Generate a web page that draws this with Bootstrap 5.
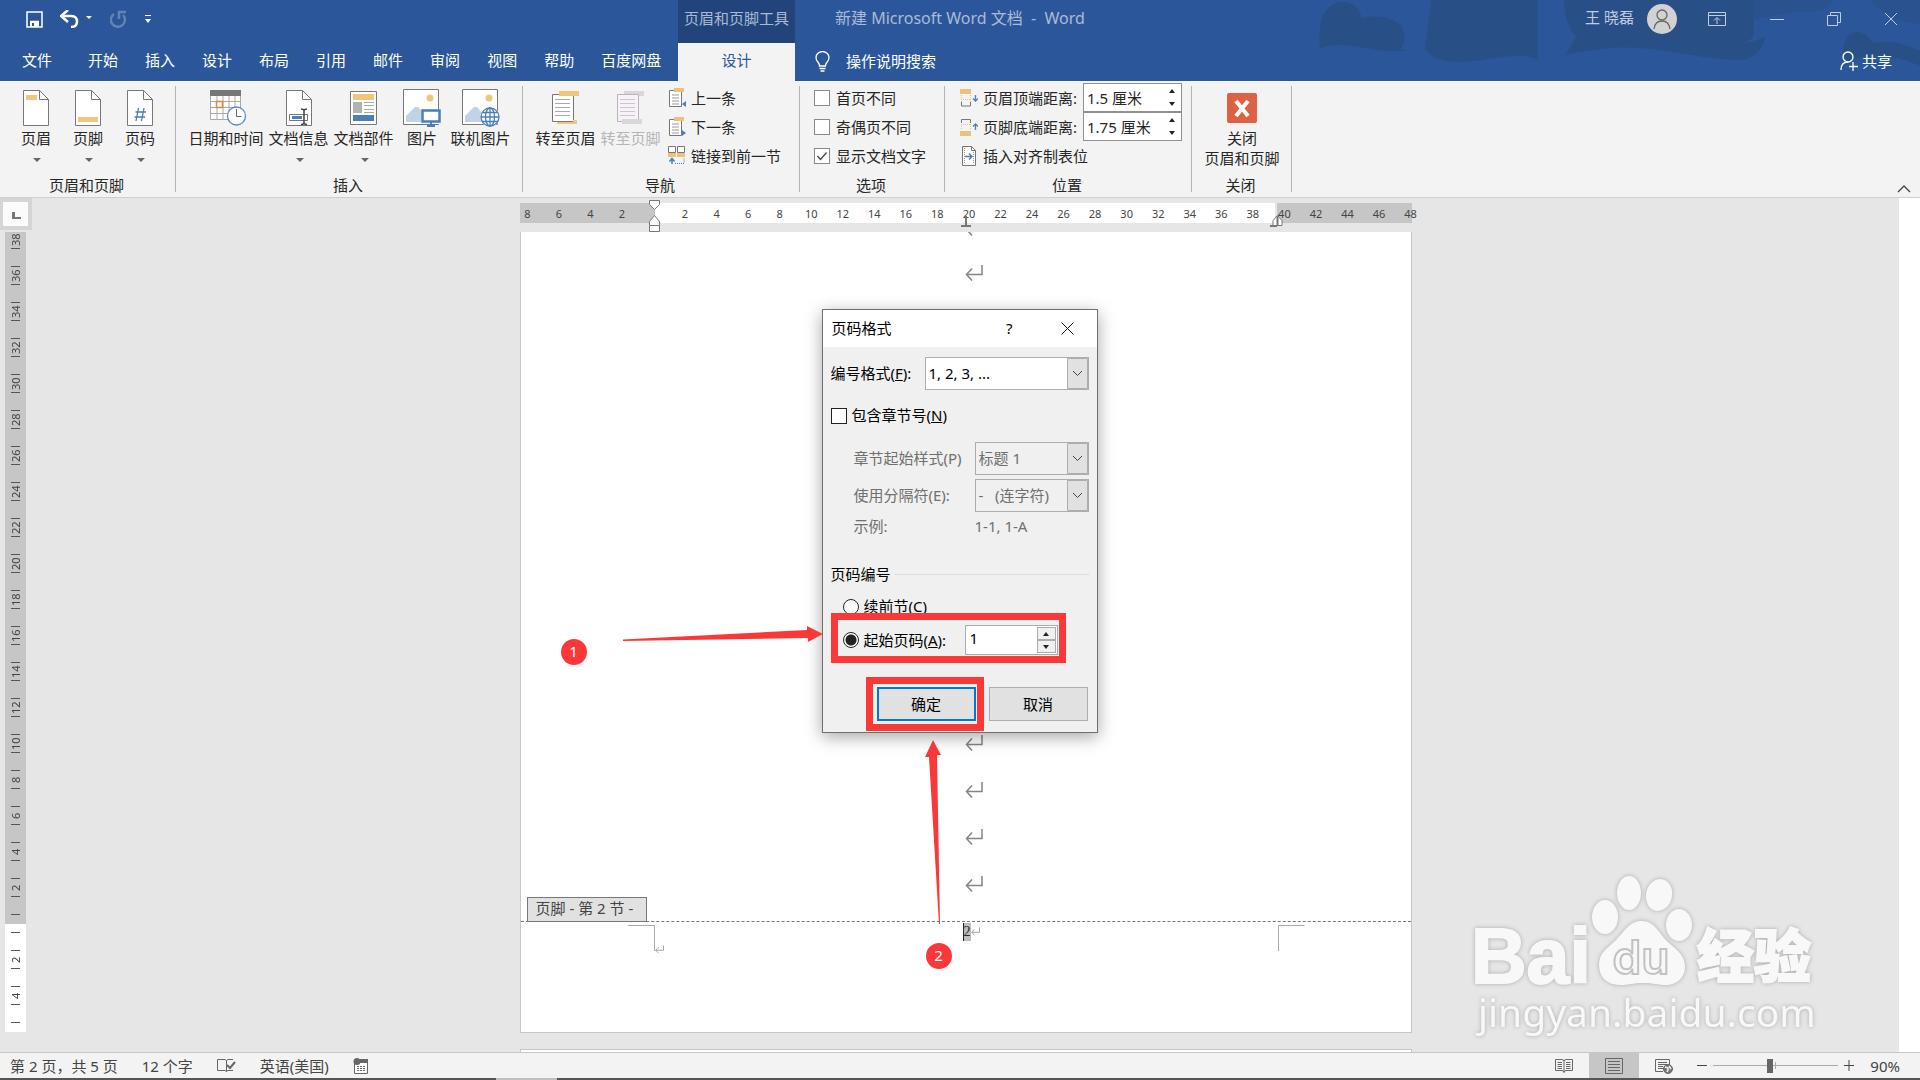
<!DOCTYPE html>
<html lang="zh-CN">
<head>
<meta charset="utf-8">
<meta name="viewport" content="width=device-width, initial-scale=1">
<title>新建 Microsoft Word 文档 - Word</title>
<link href="https://cdn.jsdelivr.net/npm/bootstrap@5.3.0/dist/css/bootstrap.min.css" rel="stylesheet">
<style>
  body { font-family: "Noto Sans", "Noto Sans CJK SC", sans-serif; font-size: 15px; line-height: 20px; color: #262626; background: #e6e6e6; }
  button, input, select { font: inherit; color: inherit; }
  button { border: 0; background: none; padding: 0; }
  svg { display: block; flex: none; }

  /* title bar and tabs */
  .app-head { display: grid; grid-template: 43px 38px / 678px 117px 1fr; background: #2b579a; color: #fff; }
  .head-art { position: absolute; right: 0; top: 0; }
  .ctx-title { background: #23447b; color: #aabbd7; padding-bottom: 7px; }
  .doc-title { color: #aabbd7; padding: 0 0 7px 40px; font-size: 16px; white-space: pre; }
  .qat { padding: 0 0 5px 26px; gap: 17px; }
  .win-tools { color: #c0cde1; padding: 0 22px 5px 0; }
  .win-gap { margin-left: 36px; }
  .tab-row { padding: 0 0 4px 22px; }
  .tab-link { color: #fff; text-decoration: none; margin-right: 27px; }
  .tab-link:first-child { margin-right: 36px; }
  .tab-current { background: #f3f3f3; color: #2b579a; text-decoration: none; }
  .tell-me { padding: 0 28px 2px 20px; }

  /* ribbon */
  .ribbon { background: #f3f3f3; border-bottom: 1px solid #cfcfcf; height: 117px; }
  .rb-group { position: relative; display: flex; flex-direction: column; padding-top: 2px; flex: none; }
  .rb-group::after { content: ""; position: absolute; right: 0; top: 5px; bottom: 5px; width: 1px; background: #b4b4b4; }
  .rb-body { display: flex; height: 92px; padding-left: 10px; }
  .rb-name { text-align: center; padding-right: 3px; }
  .g-hf { width: 176px; } .g-ins { width: 347px; } .g-nav { width: 277px; }
  .g-opt { width: 145px; } .g-pos { width: 247px; } .g-close { width: 100px; }
  .g-opt .rb-body { padding-left: 14px; } .g-pos .rb-body { padding-left: 15px; }
  .nav-list { padding-left: 5px; }
  .big-btn { display: flex; flex-direction: column; align-items: center; padding-top: 5px; width: 65px; white-space: nowrap; }
  .big-btn .ico { height: 40px; display: flex; align-items: center; justify-content: center; }
  .w-s { width: 52px; } .w-l { width: 80px; }
  .big-btn:disabled { color: #b5b5b5; }
  .caret-dn { width: 0; height: 0; border: 4px solid transparent; border-top-color: #666; border-bottom: 0; margin: 10px 0 0 2px; }
  .sm-row { display: flex; align-items: center; height: 29px; gap: 5px; white-space: nowrap; }
  .rb-check { appearance: none; width: 16px; height: 16px; border: 1px solid #8a8a8a; background: #fff; margin: 0 1px 0 0; }
  .rb-check:checked { background: #fff url("data:image/svg+xml,%3Csvg xmlns='http://www.w3.org/2000/svg' viewBox='0 0 14 14'%3E%3Cpath d='M2.500 7l3 3.500 6-7' fill='none' stroke='%23444' stroke-width='1.300'/%3E%3C/svg%3E"); }
  .rb-spin { display: flex; width: 99px; height: 29px; border: 1px solid #919191; background: #fff; margin: 0 10px 0 auto; }
  .rb-spin input { border: 0; width: 78px; padding: 0 3px; background: none; }
  .rb-spin span { display: flex; flex-direction: column; justify-content: space-around; flex: 1; align-items: center; }
  .tri-up, .tri-dn { width: 0; height: 0; border: 3px solid transparent; display: block; }
  .tri-up { border-bottom: 4px solid #222; border-top: 0; }
  .tri-dn { border-top: 4px solid #222; border-bottom: 0; }

  /* work area */
  .work { flex: 1; min-height: 0; overflow: hidden; }
  .left-col { width: 32px; }
  .tab-pick { width: 32px; height: 32px; background: #fbfbfb; border: 4px solid #d5d5d5; border-left-width: 3px; padding: 10px 0 0 9px; }
  .v-ruler { width: 21px; margin: 2px 0 0 5px; font-size: 11px; line-height: 21px; color: #444; }
  .v-body { background: #c6c6c6; height: 692px; overflow: hidden; display: flex; flex-direction: column; justify-content: flex-end; }
  .v-foot { background: #fff; height: 108px; }
  .v-scale { display: flex; flex-direction: column; background: repeating-linear-gradient(transparent 0 8px, #555 8px 9px, transparent 9px 18px) top / 9px 18px repeat-y; }
  .v-scale span { height: 36px; writing-mode: vertical-rl; transform: rotate(180deg); text-align: center; }
  .v-body .v-scale { padding-bottom: 18px; }
  .v-foot .v-scale { padding-top: 18px; height: 108px; }
  .canvas-col { width: 892px; position: relative; display: flex; flex-direction: column; }
  .h-ruler { height: 20px; margin-top: 5px; position: relative; background: linear-gradient(90deg, #c6c6c6 0 135px, #fff 135px 755px, #e6e6e6 755px 757px, #c6c6c6 757px); }
  .h-scale { display: flex; margin: 0 -15px 0 -8px; padding-top: 1px; font-size: 11px; color: #444; }
  .h-scale span { flex: 1 1 0; text-align: center; }
  .h-marks { position: absolute; left: 0; top: -5px; }
  .sheet { background: #fff; border: 1px solid #c6c6c6; border-top: 0; margin-top: 9px; height: 801px; position: relative; flex: none; }
  .sheet-next { background: #fff; border: 1px solid #c6c6c6; border-bottom: 0; margin-top: 16px; height: 20px; flex: none; }
  .sheet-text { height: 690px; border-bottom: 1px dashed #777; display: flex; flex-direction: column; align-items: center; overflow: hidden; padding-left: 16px; }
  .para { height: 47px; flex: none; display: flex; align-items: center; }
  .para-cut { height: 17px; align-items: flex-start; }
  .para-cut svg { margin-top: -12px; }
  .foot-tag { position: absolute; left: 6px; top: 665px; width: 120px; height: 25px; border: 1px solid #777; background: #e1e1e1; color: #444; padding-left: 8px; line-height: 20px; white-space: nowrap; }
  .foot-line { display: flex; justify-content: center; padding: 1px 0 0 11px; font: 14px/18px "Liberation Serif", serif; }
  .foot-num { background: #bdbdbd; border-left: 1px solid #222; }
  .overlay-art { position: absolute; left: 0; top: 0; pointer-events: none; }
  .scroll-strip { width: 21px; background: #fff; }

  /* dialog */
  .dlg { position: absolute; left: 301px; top: 77px; width: 276px; height: 424px; border: 1px solid #6e6e6e; background: #f0f0f0; color: #000; box-shadow: 0 4px 16px rgba(0,0,0,.35); white-space: nowrap; }
  .dlg-head { height: 37px; background: #fff; padding: 0 23px 1px 9px; }
  .dlg-body { padding: 10px 8px 0; }
  .dlg-sel { appearance: none; border: 1px solid #adadad; border-radius: 0; height: 33px; width: 114px; padding: 0 24px 1px 3px; color: inherit; opacity: 1;
    background: url("data:image/svg+xml,%3Csvg xmlns='http://www.w3.org/2000/svg' width='21' height='31'%3E%3Cpath d='M.5.5h20v30H.5z' fill='%23e1e1e1' stroke='%23adadad'/%3E%3Cpath d='M6 13l4.500 4.500L15 13' fill='none' stroke='%23444'/%3E%3C/svg%3E") right center no-repeat; }
  .dlg-sel.wide-sel { width: 164px; background-color: #fff; }
  .dlg-body label { padding-bottom: 1px; }
  .dim { color: #6f6f6f; padding-left: 23px; }
  .pick-row { margin-top: 15px; gap: 5px; }
  .sample { width: 114px; }
  .dlg-check { appearance: none; width: 16px; height: 16px; border: 1px solid #222; background: #fff; margin: 0; }
  .dlg-radio { appearance: none; width: 16px; height: 16px; border: 1px solid #222; border-radius: 50%; background: #fff; margin: 0; }
  .dlg-radio:checked { background: radial-gradient(circle, #222 0 5px, #fff 6px); }
  .radio-row { display: flex; align-items: center; gap: 5px; padding-left: 12px; }
  .dlg-rule { flex: 1; height: 1px; background: #dcdcdc; }
  .dlg-spin { display: flex; width: 93px; height: 30px; border: 1px solid #adadad; background: #fff; padding: 1px; margin: 0 31px 0 auto; }
  .dlg-spin input { border: 0; width: 70px; padding: 0 3px 4px; background: none; }
  .dlg-spin span { flex: 1; display: flex; flex-direction: column; }
  .dlg-spin button { flex: 1; border: 1px solid #adadad; background: #f0f0f0; display: flex; align-items: center; justify-content: center; }
  .dlg-foot { gap: 13px; padding: 32px 1px 0 0; }
  .dlg-btn { width: 99px; height: 34px; background: #e1e1e1; border: 1px solid #adadad; }
  .dlg-ok { border: 2px solid #0078d7; }
  .call-box { position: absolute; border: 7px solid #fb3838; pointer-events: none; }
  .box-num { left: 8px; top: 303px; width: 235px; height: 50px; }
  .box-ok { left: 43px; top: 367px; width: 118px; height: 54px; }
  .call-dot { position: absolute; width: 26px; height: 26px; border-radius: 50%; background: #fb3838; color: #fff; text-align: center; line-height: 24px; }
  .dot-one { left: 40px; top: 407px; } .dot-two { left: 405px; top: 711px; }

  .brand-mark { position: absolute; right: 94px; bottom: 12px; filter: drop-shadow(0 0 2px #aaa); }

  /* status bar */
  .status { height: 28px; background: #f3f3f3; border-top: 1px solid #c6c6c6; border-bottom: 2px solid #555; color: #444; position: relative; padding-left: 10px; }
  .status::after { content: ""; position: absolute; left: 496px; bottom: -2px; width: 61px; height: 2px; background: #c0c0c0; }
  .view-btn { width: 50px; height: 25px; display: flex; align-items: center; justify-content: center; }
  .view-on { background: #c6c6c6; }
  .zoom-range { appearance: none; width: 125px; height: 16px; margin: 0 6px 0 2px; background: linear-gradient(#aaa, #aaa) center / 100% 1px no-repeat, linear-gradient(#aaa, #aaa) center / 1px 7px no-repeat; }
  .zoom-range::-webkit-slider-thumb { appearance: none; width: 6px; height: 14px; background: #666; }
  .zoom-link { color: #444; text-decoration: none; margin: 0 20px 0 16px; }
</style>
</head>
<body class="vh-100 overflow-hidden d-flex flex-column m-0">

<svg width="0" height="0" class="position-absolute">
  <defs>
    <symbol id="pg" viewBox="0 0 26 36"><path d="M.5.5h16l9 9v26H.5z" fill="#fff" stroke="#777"/><path d="M16.500.5v9h9" fill="none" stroke="#777"/></symbol>
    <symbol id="ret" viewBox="0 0 18 16"><path d="M17 0v9.500H1.500M7 3.500L1.500 9.500 7 15.500" fill="none" stroke="#858585" stroke-width="1.500"/></symbol>
    <symbol id="pic" viewBox="0 0 38 38"><path d="M.5.5h35v35H.5z" fill="#fff" stroke="#777"/><circle cx="27" cy="9" r="3.500" fill="#eec77c"/><path d="M3 33V27l9-9h3l7 8v7z" fill="#c0d3e8"/></symbol>
    <symbol id="doc" viewBox="0 0 18 20"><path d="M1.500 2.500h12v16h-12z" fill="#fff" stroke="#777"/><path d="M4 7h7M4 10h7M4 13h7M4 16h7" stroke="#999"/><path d="M6 0h10v4H6z" fill="#ecc27a"/></symbol>
  </defs>
</svg>

<header class="app-head position-relative">
  <svg class="head-art" width="640" height="81" fill="#294f87">
    <path d="M40 49C37 22 44 3 62 2c14 0 18 9 20 16 12-3 30-2 39 8 7 12 2 18 0 23 10 1 5 2-18 2-28-4-45-10-63-2zM151 0h107v60c-24-12-55 6-93 1q-14-3-20-12zM284 0h190v34q-2 8-14 9 17-1 25-7c0 10-9 25-30 24-45-2-80-15-123-12q-26 2-47 7l11-18q-12-14-12-37zM568 62c-10-15-2-29 9-30 9 0 12 6 16 11 16-2 26-2 47 8v15q-22-11-45-10-15 0-27 6z"/>
    <path d="M474 0h80q-10 14-34 12-26 2-46 8zM590 0h50v24q-30-2-50-24z" opacity=".6"/>
  </svg>
  <div class="qat d-flex align-items-center position-relative">
    <button aria-label="保存"><svg width="17" height="17"><path d="M1 1h15v15H1z M4 10.500h9" fill="none" stroke="#fff" stroke-width="1.500"/><path d="M4 11h9v5H4z" fill="#fff"/><path d="M6 12h2v3H6z" fill="#2b579a"/></svg></button>
    <button aria-label="撤消"><svg width="33" height="18"><path d="M2 6h9q6 0 6 5.500T11 17" fill="none" stroke="#fff" stroke-width="2.500"/><path d="M8 0L1 6l7 6" fill="none" stroke="#fff" stroke-width="2.500"/><path d="M26 6h6l-3 3z" fill="#fff"/></svg></button>
    <button aria-label="重复"><svg width="18" height="18" viewBox="7 0 18 18" fill="none" stroke="#6482b3" stroke-width="2.500"><path d="M11 4a7 7 0 1 0 9 1M16 9V2h7"/></svg></button>
    <button aria-label="自定义快速访问工具栏"><svg width="6" height="8"><path d="M0 0h6v1H0zM0 4h6L3 8z" fill="#fff"/></svg></button>
  </div>
  <div class="ctx-title d-flex align-items-center justify-content-center text-nowrap">页眉和页脚工具</div>
  <div class="d-flex justify-content-between position-relative">
    <div class="doc-title d-flex align-items-center">新建 Microsoft Word 文档  -  Word</div>
    <div class="win-tools d-flex align-items-center">
      <span class="pb-1">王 晓磊</span>
      <svg class="ms-2 me-1" width="38" height="30" viewBox="-5 0 38 30"><circle cx="15" cy="15" r="15" fill="#d2d2d2"/><g fill="none" stroke="#666" stroke-width="1.300"><circle cx="15" cy="11" r="5"/><path d="M7 25q1-8 8-8t8 8"/></g></svg>
      <button aria-label="功能区显示选项" class="ms-4"><svg width="18" height="14" fill="none" stroke="#c0cde1"><path d="M.5.5h17v13H.5zM.5 3.500h17M9 12V6M6 8.500l3-3 3 3"/></svg></button>
      <button aria-label="最小化" class="win-gap ps-2"><svg width="14" height="14"><path d="M0 7.500h14" stroke="#c0cde1"/></svg></button>
      <button aria-label="还原" class="win-gap ps-1"><svg width="44" height="14" viewBox="6 0 44 14" fill="none" stroke="#c0cde1"><path d="M9.500 3.500h10v10h-10zM12.500 3V.5h10v10H20"/></svg></button>
      <button aria-label="关闭" class="ms-3"><svg width="14" height="14"><path d="M1 1l12 12M13 1L1 13" stroke="#c0cde1"/></svg></button>
    </div>
  </div>
  <nav class="tab-row d-flex align-items-center text-nowrap position-relative">
    <a class="tab-link" href="#">文件</a><a class="tab-link" href="#">开始</a><a class="tab-link" href="#">插入</a><a class="tab-link" href="#">设计</a><a class="tab-link" href="#">布局</a><a class="tab-link" href="#">引用</a><a class="tab-link" href="#">邮件</a><a class="tab-link" href="#">审阅</a><a class="tab-link" href="#">视图</a><a class="tab-link" href="#">帮助</a><a class="tab-link" href="#">百度网盘</a>
  </nav>
  <a class="tab-current d-flex align-items-center justify-content-center pb-1" href="#">设计</a>
  <div class="tell-me d-flex align-items-center position-relative">
    <svg width="15" height="21" fill="none" stroke="#fff" stroke-width="1.300"><path d="M4.500 15c0-4-3.500-4-3.500-8.500a6.500 6 0 0 1 13 0C14 11 10.500 11 10.500 15zM4.500 17.500h6M5.500 20h4"/></svg>
    <a class="text-white text-decoration-none ms-3" href="#">操作说明搜索</a>
    <button class="d-flex align-items-center ms-auto gap-1"><svg width="18" height="20" fill="none" stroke="#fff" stroke-width="1.300"><circle cx="8" cy="6" r="5"/><path d="M1 19q0-8 7-8M13 11v9M9 15.500h9"/></svg>共享</button>
  </div>
</header>

<section class="ribbon d-flex position-relative">
  <div class="rb-group g-hf"><div class="rb-body">
    <button class="big-btn w-s"><span class="ico"><svg width="26" height="36"><use href="#pg"/><path d="M3 5h11v5H3z" fill="#eec77c"/></svg></span>页眉<i class="caret-dn"></i></button>
    <button class="big-btn w-s"><span class="ico"><svg width="26" height="36"><use href="#pg"/><path d="M3 27h20v5H3z" fill="#eec77c"/></svg></span>页脚<i class="caret-dn"></i></button>
    <button class="big-btn w-s"><span class="ico"><svg width="26" height="36"><use href="#pg"/><path d="M11.500 18L9 31M17 18l-2.500 13M8.500 22H19M7.500 27H18" fill="none" stroke="#4a7fb8" stroke-width="1.300"/></svg></span>页码<i class="caret-dn"></i></button>
  </div><div class="rb-name">页眉和页脚</div></div>

  <div class="rb-group g-ins"><div class="rb-body">
    <button class="big-btn w-l"><span class="ico"><svg width="32" height="36" overflow="visible"><path d="M.5.500h30v29H.5z" fill="#fff" stroke="#aaa"/><path d="M7 5v24M13 5v24M19 5v24M25 5v24M1 11.500h30M1 17.500h30M1 23.500h30" stroke="#aaa"/><path d="M0 0h31v6H0z" fill="#777"/><path d="M6.500 11.500h6v6h-6z" fill="#fff" stroke="#e08544" stroke-width="1.500"/><circle cx="26.500" cy="26" r="9" fill="#fff" stroke="#5b8cc0" stroke-width="1.300"/><path d="M26.500 19v7.500h5" fill="none" stroke="#666"/></svg></span>日期和时间</button>
    <button class="big-btn"><span class="ico"><svg width="26" height="36"><use href="#pg"/><path d="M3.500 24.500h18v6h-18z" fill="#fff" stroke="#777"/><path d="M6 26h10v3H6z" fill="#4a7fb8"/><path d="M15 19q3 0 3 2 0-2 3-2M18 20v14M15 34.500q3 0 3-2 0 2 3 2" fill="none" stroke="#444" stroke-width="1.500"/></svg></span>文档信息<i class="caret-dn"></i></button>
    <button class="big-btn"><span class="ico"><svg width="27" height="34"><path d="M.5.5h26v33H.5z" fill="#fff" stroke="#777"/><path d="M3 3h21v6H3z" fill="#eec77c"/><path d="M3 11h9v11H3z" fill="#b2b2b2"/><path d="M14 11.500h10M14 14.500h10M14 18.500h10M14 21.500h10" stroke="#aaa"/><path d="M3 24h21v6H3z" fill="#4a7fb8"/></svg></span>文档部件<i class="caret-dn"></i></button>
    <button class="big-btn w-s"><span class="ico"><svg width="38" height="38"><use href="#pic" width="38" height="38"/><path d="M18.500 20.500h19v14h-19z" fill="#fff" stroke="#f3f3f3"/><path d="M19.500 21.500h17v11h-17z" fill="#fff" stroke="#4a7fb8" stroke-width="2.500"/><path d="M24 37h8M28 33v4" stroke="#4a7fb8" stroke-width="2"/></svg></span>图片</button>
    <button class="big-btn"><span class="ico"><svg width="38" height="38"><use href="#pic" width="38" height="38"/><circle cx="28" cy="28" r="10" fill="#f3f3f3"/><g fill="#fff" stroke="#4a7fb8" stroke-width="1.300"><circle cx="28" cy="28" r="9"/><ellipse cx="28" cy="28" rx="4.500" ry="9"/><path d="M19 28h18M28 19v18M20.500 23.500h15M20.500 32.500h15" fill="none"/></g></svg></span>联机图片</button>
  </div><div class="rb-name">插入</div></div>

  <div class="rb-group g-nav"><div class="rb-body">
    <button class="big-btn"><span class="ico"><svg width="28" height="34"><path d="M.5 3.500h21v27H.5z" fill="#fff" stroke="#777"/><path d="M3 8.500h15M3 12.500h15M3 16.500h15M3 20.500h15M3 24.500h15" stroke="#aaa"/><path d="M7 0h20v5H7z" fill="#eec77c"/><path d="M5 31h16v-2h4v4H5z" fill="#eec77c"/></svg></span>转至页眉</button>
    <button class="big-btn" disabled><span class="ico"><svg width="28" height="34"><path d="M.5 3.500h21v27H.5z" fill="#f7f1f8" stroke="#b5b5b5"/><path d="M3 8.500h15M3 12.500h15M3 16.500h15M3 20.500h15M3 24.500h15" stroke="#ccc5cf"/><path d="M7 0h20v5h-5V3H7zM5 28h20v5H5z" fill="#dad6dc"/></svg></span>转至页脚</button>
    <div class="nav-list">
      <button class="sm-row"><svg width="18" height="20"><use href="#doc"/><path d="M18 13v6l-4-3z" fill="#4a7fb8"/></svg>上一条</button>
      <button class="sm-row"><svg width="18" height="20"><use href="#doc"/><path d="M14 13v6l4-3z" fill="#4a7fb8"/></svg>下一条</button>
      <button class="sm-row"><svg width="18" height="19"><path d="M.5.5h7v6h-7zM9.500.5h7v6h-7z" fill="#fff" stroke="#777"/><path d="M0 7h8v4H0zM9 7h8v4H9z" fill="#ecc27a"/><path d="M4 18v-5M1.500 15.500L4 12.500l2.500 3" fill="none" stroke="#4a7fb8" stroke-width="1.500"/><path d="M7 17.500h9V12" fill="none" stroke="#4a7fb8" stroke-dasharray="1 1"/></svg>链接到前一节</button>
    </div>
  </div><div class="rb-name">导航</div></div>

  <div class="rb-group g-opt"><div class="rb-body flex-column">
    <label class="sm-row"><input class="rb-check" type="checkbox">首页不同</label>
    <label class="sm-row"><input class="rb-check" type="checkbox">奇偶页不同</label>
    <label class="sm-row"><input class="rb-check" type="checkbox" checked>显示文档文字</label>
  </div><div class="rb-name">选项</div></div>

  <div class="rb-group g-pos"><div class="rb-body flex-column">
    <div class="sm-row"><svg width="18" height="18"><path d="M1.500 13v4h9v-4" fill="none" stroke="#777"/><path d="M1 10.500h10M1.500 6v7M10.500 6v7" stroke="#ecc27a" stroke-dasharray="1 1"/><path d="M0 0h11v5H0z" fill="#ecc27a"/><path d="M15.500 6v6M13 9.500l2.500 2.500L18 9.500" fill="none" stroke="#4a7fb8" stroke-width="1.300"/></svg><label for="hd">页眉顶端距离:</label><span class="rb-spin"><input id="hd" value="1.5 厘米"><span><i class="tri-up"></i><i class="tri-dn"></i></span></span></div>
    <div class="sm-row"><svg width="18" height="18"><path d="M1.500 5V1.500h9V5" fill="none" stroke="#777"/><path d="M1 6.500h10M1.500 6v6M10.500 6v6" stroke="#ecc27a" stroke-dasharray="1 1"/><path d="M0 13h11v5H0z" fill="#ecc27a"/><path d="M15.500 12V6M13 8.500L15.500 6 18 8.500" fill="none" stroke="#4a7fb8" stroke-width="1.300"/></svg><label for="fd">页脚底端距离:</label><span class="rb-spin"><input id="fd" value="1.75 厘米"><span><i class="tri-up"></i><i class="tri-dn"></i></span></span></div>
    <button class="sm-row"><svg width="18" height="20"><path d="M2.500.5h9l4 4v15h-13z" fill="#fff" stroke="#777"/><path d="M11.500.5v4h4" fill="none" stroke="#777"/><path d="M4.500 2v16M13.500 6v12" stroke="#999" stroke-dasharray="1 1"/><path d="M5 10.500h7M9 7.500l3 3-3 3" fill="none" stroke="#4a7fb8" stroke-width="1.500"/></svg>插入对齐制表位</button>
  </div><div class="rb-name">位置</div></div>

  <div class="rb-group g-close"><div class="rb-body ps-0 justify-content-center">
    <button class="big-btn w-l"><span class="ico"><svg width="30" height="30"><rect width="30" height="30" rx="2" fill="#db6245"/><path d="M9 8l12 15M21 8L9 23" stroke="#fff" stroke-width="4"/></svg></span>关闭<br>页眉和页脚</button>
  </div><div class="rb-name">关闭</div></div>
  <button class="ms-auto mt-auto me-2 pb-1" aria-label="折叠功能区"><svg width="16" height="8"><path d="M2 7l6-6 6 6" fill="none" stroke="#444" stroke-width="1.300"/></svg></button>
</section>

<main class="work d-flex position-relative">
  <div class="left-col">
    <div class="tab-pick"><svg width="9" height="7"><path d="M0 0h3v5h6v2H0z" fill="#777"/></svg></div>
    <div class="v-ruler">
      <div class="v-body"><div class="v-scale"><span>38</span><span>36</span><span>34</span><span>32</span><span>30</span><span>28</span><span>26</span><span>24</span><span>22</span><span>20</span><span>18</span><span>16</span><span>14</span><span>12</span><span>10</span><span>8</span><span>6</span><span>4</span><span>2</span></div></div>
      <div class="v-foot"><div class="v-scale"><span>2</span><span>4</span></div></div>
    </div>
  </div>

  <div class="flex-fill d-flex justify-content-center">
    <div class="canvas-col">
      <div class="h-ruler">
        <div class="h-scale"><span>8</span><span>6</span><span>4</span><span>2</span><span></span><span>2</span><span>4</span><span>6</span><span>8</span><span>10</span><span>12</span><span>14</span><span>16</span><span>18</span><span>20</span><span>22</span><span>24</span><span>26</span><span>28</span><span>30</span><span>32</span><span>34</span><span>36</span><span>38</span><span>40</span><span>42</span><span>44</span><span>46</span><span>48</span></div>
        <svg class="h-marks" width="892" height="36" fill="#fff" stroke="#777"><path d="M129.500 2.500h10v4l-5 5-5-5zM129.500 27.500v-4l5-6 5 6v4zM129.500 27.500h10v6h-10zM753 27.500v-5l4.500-5 4.500 5v5z"/><path d="M446 18v9M441 28h10M750 28h7" stroke-width="2"/><path d="M757.500 18v10" stroke-width="2"/></svg>
      </div>

      <article class="sheet">
        <div class="sheet-text">
          <div class="para para-cut"><svg width="18" height="16"><use href="#ret"/></svg></div>
          <div class="para"><svg width="18" height="16"><use href="#ret"/></svg></div><div class="para"><svg width="18" height="16"><use href="#ret"/></svg></div><div class="para"><svg width="18" height="16"><use href="#ret"/></svg></div><div class="para"><svg width="18" height="16"><use href="#ret"/></svg></div><div class="para"><svg width="18" height="16"><use href="#ret"/></svg></div><div class="para"><svg width="18" height="16"><use href="#ret"/></svg></div><div class="para"><svg width="18" height="16"><use href="#ret"/></svg></div><div class="para"><svg width="18" height="16"><use href="#ret"/></svg></div><div class="para"><svg width="18" height="16"><use href="#ret"/></svg></div><div class="para"><svg width="18" height="16"><use href="#ret"/></svg></div><div class="para"><svg width="18" height="16"><use href="#ret"/></svg></div><div class="para"><svg width="18" height="16"><use href="#ret"/></svg></div><div class="para"><svg width="18" height="16"><use href="#ret"/></svg></div><div class="para"><svg width="18" height="16"><use href="#ret"/></svg></div>
        </div>
        <div class="foot-line"><span class="foot-num">2</span><svg class="mt-1" width="9" height="9"><use href="#ret"/></svg></div>
        <div class="foot-tag">页脚 - 第 2 节 -</div>

        <svg class="overlay-art" width="890" height="800">
          <path d="M107 693.500h26.500V719M783.500 693.500H757.500V719" fill="none" stroke="#aaa"/>
          <use href="#ret" x="134" y="713" width="9" height="9"/>
        </svg>

        <form class="dlg" onsubmit="return false">
          <div class="dlg-head d-flex align-items-center"><span class="me-auto">页码格式</span>
            <button type="button" class="me-5" aria-label="帮助">?</button>
            <button type="button" aria-label="关闭"><svg width="13" height="13"><path d="M.5.5l12 12M12.500.5l-12 12" stroke="#111"/></svg></button></div>
          <div class="dlg-body">
            <div class="d-flex align-items-center justify-content-between"><label for="nf">编号格式(<u>F</u>):</label><select id="nf" class="dlg-sel wide-sel"><option>1, 2, 3, ...</option></select></div>
            <div class="pick-row d-flex align-items-center"><input class="dlg-check" type="checkbox" id="inc"><label for="inc">包含章节号(<u>N</u>)</label></div>
            <div class="d-flex align-items-center justify-content-between dim mt-3"><label for="cs">章节起始样式(P)</label><select id="cs" class="dlg-sel" disabled><option>标题 1</option></select></div>
            <div class="d-flex align-items-center justify-content-between dim mt-1"><label for="sp">使用分隔符(E):</label><select id="sp" class="dlg-sel" disabled><option>-&nbsp;&nbsp; (连字符)</option></select></div>
            <div class="d-flex dim justify-content-between mt-1"><span>示例:</span><span class="sample">1-1, 1-A</span></div>
            <div class="d-flex align-items-center gap-1 mt-4 pt-1"><span>页码编号</span><span class="dlg-rule"></span></div>
            <div class="radio-row mt-2 pt-1"><input class="dlg-radio" type="radio" name="start" id="r1"><label for="r1">续前节(<u>C</u>)</label></div>
            <div class="radio-row mt-2"><input class="dlg-radio" type="radio" name="start" id="r2" checked><label for="r2">起始页码(<u>A</u>):</label>
              <span class="dlg-spin"><input aria-label="起始页码" value="1"><span><button type="button" aria-label="增加"><i class="tri-up"></i></button><button type="button" aria-label="减少"><i class="tri-dn"></i></button></span></span></div>
            <div class="d-flex justify-content-end dlg-foot"><button class="dlg-btn dlg-ok">确定</button><button class="dlg-btn" type="button">取消</button></div>
          </div>
          <span class="call-box box-num"></span><span class="call-box box-ok"></span>
        </form>

        <svg class="overlay-art" width="890" height="800" fill="#fb3838">
          <path d="M102 407.500L286 398v-4l16 8-15 8v-4L102 409zM418 692L408 525h-4l8-17 8 15h-4L419 692z"/>
        </svg>
        <span class="call-dot dot-one">1</span><span class="call-dot dot-two">2</span>
      </article>
      <div class="sheet-next"></div>
    </div>
  </div>
  <div class="scroll-strip"></div>

  <svg class="brand-mark" width="356" height="172" fill="#f8f8f8">
    <text x="1" y="115" font-family="Liberation Sans, sans-serif" font-weight="700" font-size="77" stroke="#f8f8f8" stroke-width="2">Bai</text>
    <ellipse cx="135" cy="49" rx="13" ry="17"/><ellipse cx="159" cy="25" rx="12" ry="17"/><ellipse cx="189" cy="27" rx="13" ry="16" transform="rotate(12 189 27)"/><ellipse cx="209" cy="57" rx="13" ry="16"/>
    <path d="M172 53c13 0 17 13 27 22 10 8 16 14 16 24 0 12-10 19-21 18-9-1-13-2-22-2s-13 2-22 2c-14 0-21-9-21-20 0-13 9-17 17-25 9-9 13-19 26-19z"/>
    <text x="227" y="109" font-family="Noto Sans CJK SC, sans-serif" font-weight="900" font-size="57" stroke="#f8f8f8" stroke-width="2">经验</text>
    <text x="171" y="106" text-anchor="middle" font-family="Inter, sans-serif" font-weight="600" font-size="46" stroke="#c2c2c2" stroke-width="2">du</text>
    <text x="8" y="159" font-family="Noto Sans, sans-serif" font-size="39">jingyan.baidu.com</text>
  </svg>
</main>

<footer class="status d-flex align-items-center text-nowrap">
  <span>第 2 页，共 5 页</span>
  <span class="ms-4">12 个字</span>
  <svg class="ms-4" width="19" height="15" fill="none" stroke="#666"><path d="M9.500 13.500L8 12.500H.5v-11H8l1.500 1 1.500-1h5M9.500 2.500v11l1.500-1h5"/><path d="M10 7l3 3 5-6" stroke-width="2"/></svg>
  <span class="ms-4">英语(美国)</span>
  <svg class="ms-4" width="16" height="16"><path d="M1.500 4v11.500h13V3.500H5" fill="#fff" stroke="#666"/><path d="M7 1h8v4H7z" fill="#666"/><circle cx="4" cy="3.500" r="3.500" fill="#666"/><path d="M4 8.500h9M4 10.500h9M4 12.500h9" stroke="#666" stroke-dasharray="2 1"/></svg>
  <div class="ms-auto d-flex align-items-center">
    <button class="view-btn" aria-label="阅读视图"><svg width="18" height="15" fill="none" stroke="#666"><path d="M9 13.500l-2-1H.5v-11H7l2 1 2-1h6.500v11H11zM9 2v13M2.500 4.500H7M2.500 6.500H7M2.500 8.500H7M2.500 10.500H7M11 4.500h4.500M11 6.500h4.500M11 8.500h4.500M11 10.500h4.500"/></svg></button>
    <button class="view-btn view-on" aria-label="页面视图"><svg width="18" height="16" fill="none" stroke="#666"><path d="M.5.5h17v15H.5zM3 3.500h12M3 6.500h12M3 9.500h12M3 12.500h12"/></svg></button>
    <button class="view-btn" aria-label="Web 版式视图"><svg width="18" height="16" fill="none" stroke="#666"><path d="M8 13.500H.5V1.500h14V7M3 4.500h9M3 6.500h9M3 8.500h5M3 10.500h5"/><circle cx="13" cy="11" r="4.500" fill="#777"/><path d="M10 9l3 1v2l-1 2M14 8l2 3" stroke="#f3f3f3" stroke-width="1.500"/></svg></button>
    <button class="ms-1 px-1" aria-label="缩小"><svg width="10" height="11"><path d="M0 5.500h10" stroke="#444"/></svg></button>
    <input class="zoom-range" type="range" min="0" max="100" value="45" aria-label="显示比例">
    <button aria-label="放大"><svg width="10" height="11"><path d="M0 5.500h10M5 0v11" stroke="#444"/></svg></button>
    <a class="zoom-link" href="#">90%</a>
  </div>
</footer>
<script src="https://cdn.jsdelivr.net/npm/bootstrap@5.3.0/dist/js/bootstrap.bundle.min.js"></script>
</body>
</html>
